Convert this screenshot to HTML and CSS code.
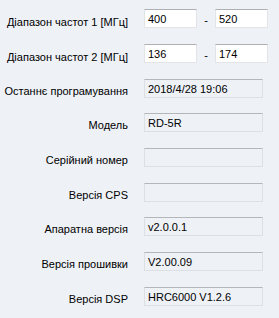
FILE: index.html
```html
<!DOCTYPE html>
<html>
<head>
<meta charset="utf-8">
<link rel="stylesheet" href="styles.css">
</head>
<body>
<div class="form">
  <div class="row">
    <div class="label lab-low">Діапазон частот 1 [МГц]</div>
    <div class="box edit short">400</div>
    <div class="dash">-</div>
    <div class="box edit short">520</div>
  </div>
  <div class="row">
    <div class="label lab-low">Діапазон частот 2 [МГц]</div>
    <div class="box edit short">136</div>
    <div class="dash">-</div>
    <div class="box edit short">174</div>
  </div>
  <div class="row">
    <div class="label">Останнє програмування</div>
    <div class="box ro">2018/4/28 19:06</div>
  </div>
  <div class="row r2">
    <div class="label">Модель</div>
    <div class="box ro">RD-5R</div>
  </div>
  <div class="row">
    <div class="label">Серійний номер</div>
    <div class="box ro"></div>
  </div>
  <div class="row">
    <div class="label">Версія CPS</div>
    <div class="box ro"></div>
  </div>
  <div class="row r2">
    <div class="label">Апаратна версія</div>
    <div class="box ro">v2.0.0.1</div>
  </div>
  <div class="row">
    <div class="label">Версія прошивки</div>
    <div class="box ro">V2.00.09</div>
  </div>
  <div class="row">
    <div class="label">Версія DSP</div>
    <div class="box ro">HRC6000 V1.2.6</div>
  </div>
</div>
</body>
</html>
```
FILE: styles.css
```css
html, body {
  margin: 0;
  padding: 0;
  background: #eef1f6;
}
body {
  width: 279px;
  height: 318px;
  overflow: hidden;
  font-family: "Liberation Sans", Arial, sans-serif;
  font-size: 11px;
  color: #000;
}
.form {
  padding-top: 9px;
  display: flex;
  flex-direction: column;
  gap: 16px;
}
.row.r2 {
  margin-top: -1px;
}
.row {
  display: flex;
  align-items: center;
  height: 19px;
}
.label {
  width: 128px;
  text-align: right;
  margin-right: 16px;
  padding-top: 4px;
  white-space: nowrap;
}
.label.lab-low {
  padding-top: 6px;
}
.box {
  box-sizing: border-box;
  height: 19px;
  border: 1px solid #dcdfe3;
  border-top-color: #b4b6ba;
  padding: 3px 0 0 3px;
  line-height: 13px;
  white-space: nowrap;
}
.edit {
  background: #ffffff;
  border-color: #e2e4e8;
  border-top-color: #adafb3;
}
.short {
  width: 53px;
}
.ro {
  width: 119px;
  background: #eef1f6;
}
.dash {
  width: 18px;
  text-align: center;
  padding-top: 2px;
}
```
